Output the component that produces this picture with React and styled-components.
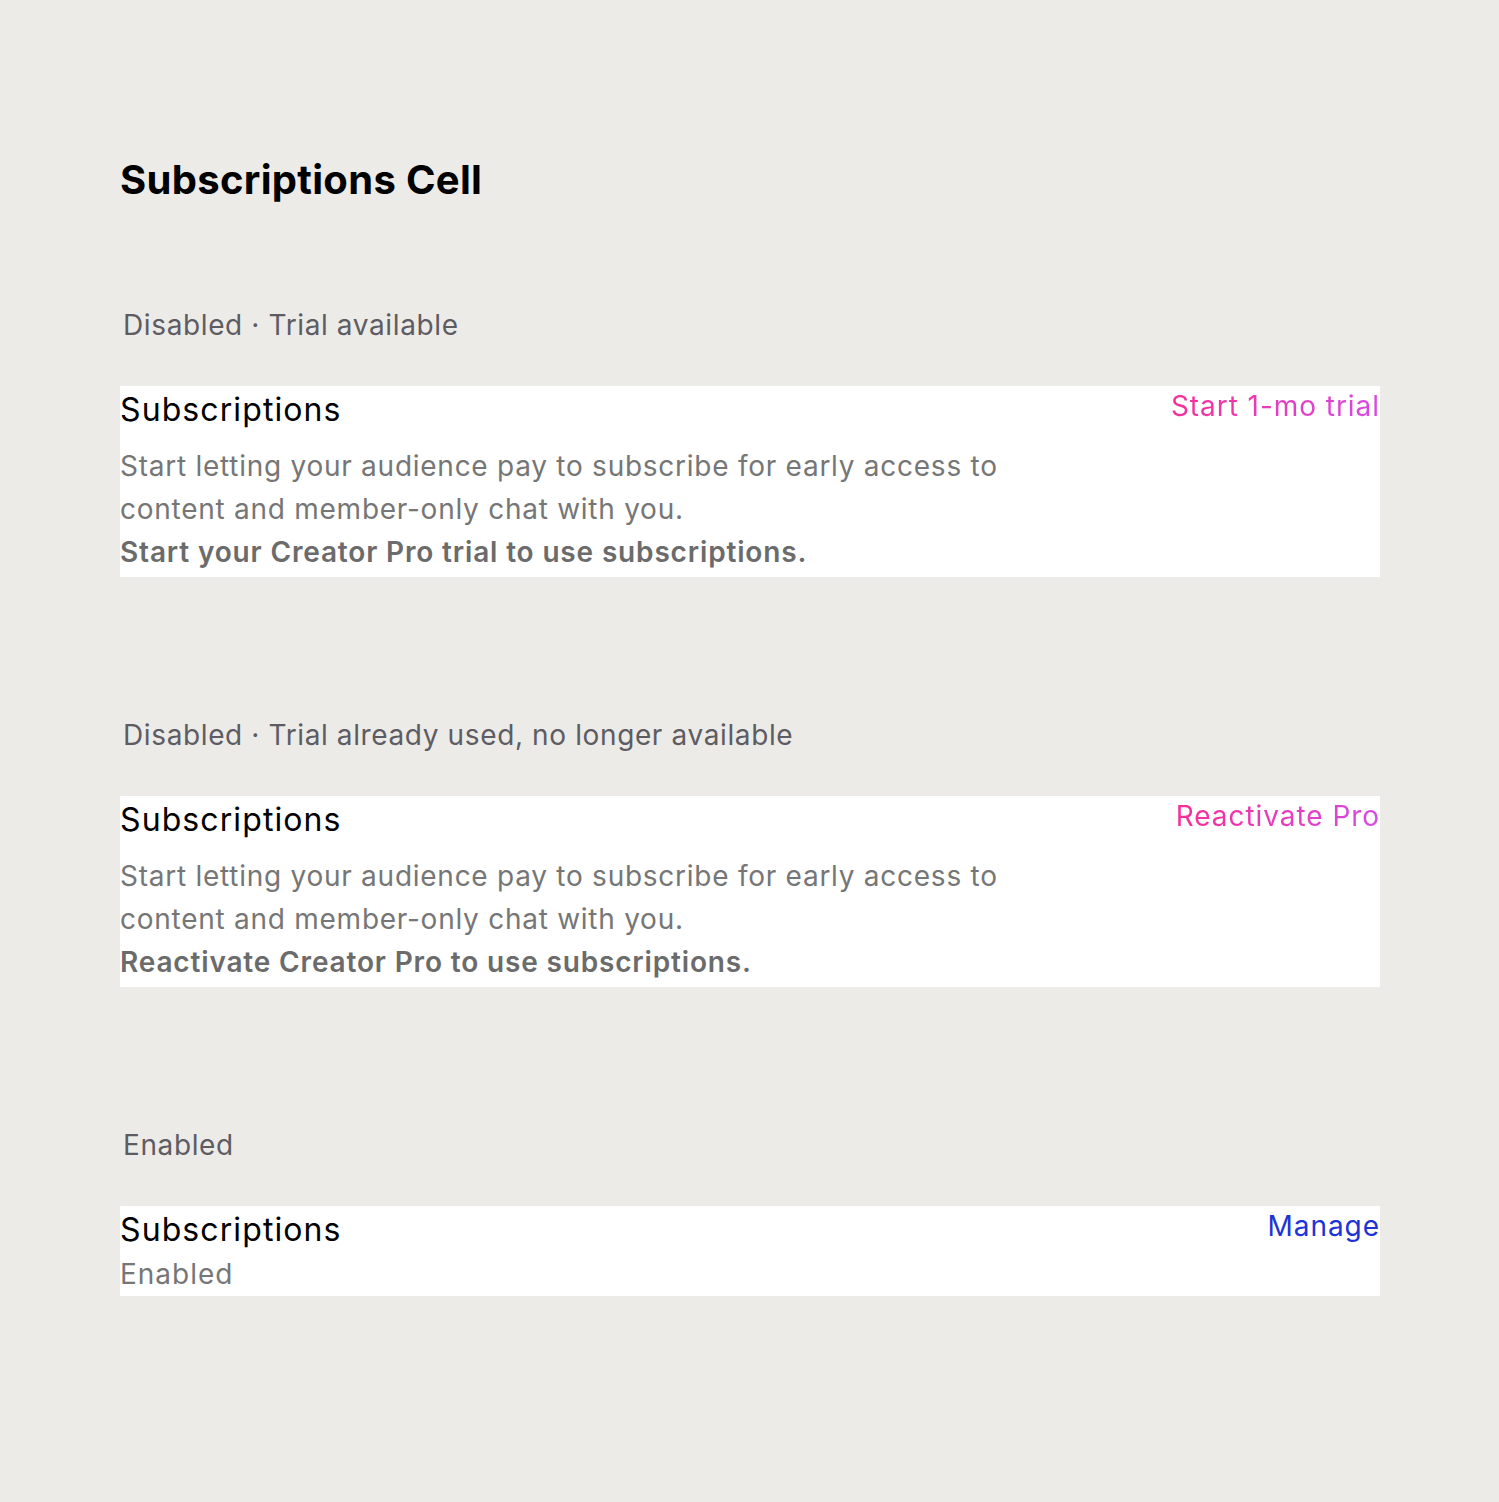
import React from 'react'
import styled, { createGlobalStyle } from 'styled-components'

const GlobalStyle = createGlobalStyle`
  html, body {
    margin: 0;
    padding: 0;
    background: #edebe8;
  }
  body {
    font-family: Inter, "Noto Sans", "Liberation Sans", sans-serif;
    -webkit-font-smoothing: antialiased;
  }
`

const cells = [
    {
        id: 1,
        label: 'Disabled · Trial available',
        action: 'Start 1-mo trial',
        tone: 'pro',
        note: 'Start your Creator Pro trial to use subscriptions.',
    },
    {
        id: 2,
        label: 'Disabled · Trial already used, no longer available',
        action: 'Reactivate Pro',
        tone: 'pro',
        note: 'Reactivate Creator Pro to use subscriptions.',
    },
    {
        id: 3,
        label: 'Enabled',
        action: 'Manage',
        tone: 'link',
        status: 'Enabled',
    },
]

function App() {
    return (
        <>
            <GlobalStyle />
            <Page>
                <PageTitle>Subscriptions Cell</PageTitle>
                {cells.map((cell) => (
                    <Section key={cell.id}>
                        <Label>{cell.label}</Label>
                        <Cell>
                            <CellBody>
                                <CellTitle>Subscriptions</CellTitle>
                                {cell.status ? (
                                    <Status>{cell.status}</Status>
                                ) : (
                                    <Description>
                                        Start letting your audience pay to subscribe for early access to content and member-only chat with you.
                                        <Note>{cell.note}</Note>
                                    </Description>
                                )}
                            </CellBody>
                            <Action $tone={cell.tone}>{cell.action}</Action>
                        </Cell>
                    </Section>
                ))}
            </Page>
        </>
    )
}

const Page = styled.div`
    padding: 156px 119px 205px 120px;
    display: flex;
    flex-direction: column;
`

const PageTitle = styled.h1`
    margin: 0 0 104px;
    font-size: 40px;
    line-height: 48px;
    font-weight: 700;
    letter-spacing: 0.3px;
    color: #000;
`

const Section = styled.section`
    display: flex;
    flex-direction: column;
    margin-bottom: 141px;
    &:last-child{
        margin-bottom: 0;
    }
`

const Label = styled.div`
    padding-left: 3px;
    font-size: 28px;
    line-height: 34px;
    letter-spacing: 0.62px;
    color: #5d5c63;
    margin-bottom: 44px;
`

const Cell = styled.div`
    background: #fff;
    display: flex;
    justify-content: space-between;
    align-items: flex-start;
    padding: 4px 0 3px;
`

const CellBody = styled.div`
    display: flex;
    flex-direction: column;
`

const CellTitle = styled.div`
    font-size: 32px;
    line-height: 40px;
    letter-spacing: 1.1px;
    color: #000;
`

const Description = styled.div`
    margin-top: 15px;
    max-width: 900px;
    font-size: 28px;
    line-height: 43px;
    letter-spacing: 0.74px;
    color: #767676;
`

const Note = styled.div`
    font-weight: 600;
    letter-spacing: 0.84px;
    color: #6b6b6b;
`

const Status = styled.div`
    margin-top: 7px;
    font-size: 28px;
    line-height: 34px;
    letter-spacing: 1px;
    color: #767676;
    margin-bottom: 2px;
`

const Action = styled.div`
    font-size: 28px;
    line-height: 34px;
    letter-spacing: 0.95px;
    margin-top: -1px;
    white-space: nowrap;
    color: ${(p) => (p.$tone === 'link' ? '#1e33d6' : '#e83bb8')};
    ${(p) => p.$tone === 'pro' && `
        background: linear-gradient(90deg, #f72e97, #d64ae2);
        -webkit-background-clip: text;
        background-clip: text;
        -webkit-text-fill-color: transparent;
    `}
`

export default App
